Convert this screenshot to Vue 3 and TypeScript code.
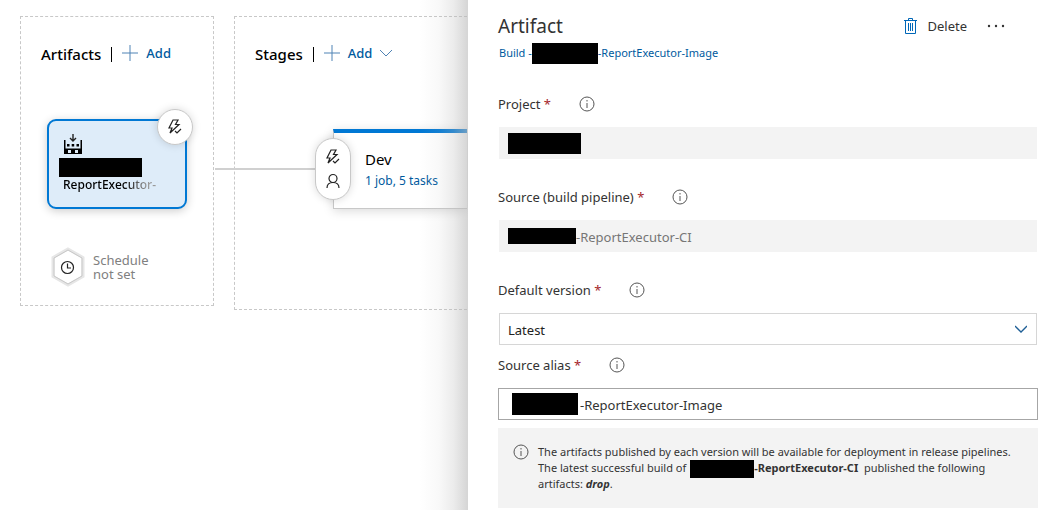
<script setup lang="ts">
import { ref } from 'vue'

const version = ref<string>('Latest')
const source = ref<string>('-ReportExecutor-CI')
const alias = ref<string>('-ReportExecutor-Image')
</script>

<template>
  <div class="page">
    <main class="canvas">
      <section class="lane artifacts">
        <header class="lane-head">
          <h2>Artifacts</h2>
          <span class="bar"></span>
          <button type="button" class="add">
            <svg width="16" height="16" viewBox="0 0 16 16"><path d="M8 0v16M0 8h16" /></svg>
            <span>Add</span>
          </button>
        </header>

        <div class="artifact-card">
          <svg class="factory" width="18" height="20" viewBox="0 0 18 20">
            <path d="M9 0v7M6 4l3 3 3-3" fill="none" stroke="#222" stroke-width="1.4" />
            <path fill="#000" fill-rule="evenodd" d="M0 6h1.500v8.500h15V6H18v14H0zM4 16v3h3v-3zM11 16v3h3v-3z" />
            <path fill="#000" d="M3 10h2.500v2.500H3zM7.700 10h2.500v2.500H7.700zM12.500 10H15v2.500h-2.500z" />
          </svg>
          <span class="mask card-mask"></span>
          <span class="card-name">ReportExecutor-</span>
          <button type="button" class="badge" aria-label="Continuous deployment trigger">
            <svg class="bolt" width="16" height="16" viewBox="0 0 16 16"><path d="M6 1h5L8.500 5.500H12L3 14l2-5H2zM8 12l2 2 4-4" /></svg>
          </button>
        </div>

        <div class="schedule">
          <svg width="34" height="40" viewBox="0 0 34 40">
            <path d="M17 2 32 10.500v19L17 38 2 29.500v-19z" fill="#fff" stroke="#e6e6e6" stroke-width="3" />
            <path d="M17 3 31 11v18l-14 8L3 29V11z" fill="none" stroke="#c8c8c8" />
            <circle cx="16.500" cy="20.500" r="6" fill="none" stroke="#222" stroke-width="1.200" />
            <path d="M16.500 16.500v4.500h3.500" fill="none" stroke="#222" stroke-width="1.200" />
          </svg>
          <span>Schedule<br />not set</span>
        </div>
      </section>

      <section class="lane stages">
        <header class="lane-head">
          <h2>Stages</h2>
          <span class="bar"></span>
          <button type="button" class="add">
            <svg width="16" height="16" viewBox="0 0 16 16"><path d="M8 0v16M0 8h16" /></svg>
            <span>Add</span>
            <svg width="12" height="8" viewBox="0 0 12 8"><path d="M0 1l6 6 6-6" /></svg>
          </button>
        </header>

        <div class="stage-card">
          <span class="connector"></span>
          <button type="button" class="pill" aria-label="Pre-deployment conditions">
            <svg class="bolt" width="16" height="16" viewBox="0 0 16 16"><path d="M6 1h5L8.500 5.500H12L3 14l2-5H2zM8 12l2 2 4-4" /></svg>
            <svg class="bolt" width="16" height="16" viewBox="0 0 16 16"><circle cx="8" cy="5.500" r="4" /><path d="M2 15c0-3.500 2.500-5.500 6-5.500s6 2 6 5.500" /></svg>
          </button>
          <h3>Dev</h3>
          <a href="#">1 job, 5 tasks</a>
        </div>
      </section>
    </main>

    <aside class="panel">
      <header class="panel-head">
        <h1>Artifact</h1>
        <div class="actions">
          <button type="button" class="delete">
            <svg width="14" height="16" viewBox="0 0 14 16" fill="none" stroke="#0067b8">
              <path d="M0 2.500h13M4.500 2V.5h4V2M1.500 3v12.500h10V3M4.500 5v8M6.500 5v8M8.500 5v8" />
            </svg>
            Delete
          </button>
          <button type="button" class="more" aria-label="More actions">
            <svg width="18" height="4" viewBox="0 0 18 4" fill="#333"><circle cx="2" cy="2" r="1.200" /><circle cx="9" cy="2" r="1.200" /><circle cx="16" cy="2" r="1.200" /></svg>
          </button>
        </div>
      </header>
      <a href="#" class="crumb"><span>Build -</span><span class="mask crumb-mask"></span><span>-ReportExecutor-Image</span></a>

      <form @submit.prevent>
        <div class="group">
          <div class="label">
            <label for="project">Project <b>*</b></label>
            <svg class="info" width="16" height="16" viewBox="0 0 16 16"><circle cx="8" cy="8" r="7" /><path d="M8 7v5M8 4v1.500" /></svg>
          </div>
          <div class="field disabled">
            <span class="mask project-mask"></span>
            <input id="project" type="text" disabled />
          </div>
        </div>

        <div class="group">
          <div class="label">
            <label for="source">Source (build pipeline) <b>*</b></label>
            <svg class="info" width="16" height="16" viewBox="0 0 16 16"><circle cx="8" cy="8" r="7" /><path d="M8 7v5M8 4v1.500" /></svg>
          </div>
          <div class="field disabled">
            <span class="mask source-mask"></span>
            <input id="source" v-model="source" type="text" disabled />
          </div>
        </div>

        <div class="group tight">
          <div class="label">
            <label for="version">Default version <b>*</b></label>
            <svg class="info" width="16" height="16" viewBox="0 0 16 16"><circle cx="8" cy="8" r="7" /><path d="M8 7v5M8 4v1.500" /></svg>
          </div>
          <div class="field dropdown">
            <select id="version" v-model="version">
              <option>Latest</option>
            </select>
            <svg width="12" height="8" viewBox="0 0 12 8" fill="none" stroke="#1f5f96" stroke-width="1.300"><path d="M0 1l6 6 6-6" /></svg>
          </div>
        </div>

        <div class="group last">
          <div class="label">
            <label for="alias">Source alias <b>*</b></label>
            <svg class="info" width="16" height="16" viewBox="0 0 16 16"><circle cx="8" cy="8" r="7" /><path d="M8 7v5M8 4v1.500" /></svg>
          </div>
          <div class="field alias">
            <span class="mask alias-mask"></span>
            <input id="alias" v-model="alias" type="text" />
          </div>
        </div>
      </form>

      <div class="note">
        <svg class="info" width="16" height="16" viewBox="0 0 16 16"><circle cx="8" cy="8" r="7" /><path d="M8 7v5M8 4v1.500" /></svg>
        <p>
          The artifacts published by each version will be available for deployment in release pipelines.
          The latest successful build of<span class="mask note-mask"></span><strong>-ReportExecutor-CI</strong>&nbsp; published the following
          artifacts: <strong><em>drop</em></strong>.
        </p>
      </div>
    </aside>
  </div>
</template>

<style>
body {
  margin: 0;
  background: #fff;
}
</style>

<style scoped>
.page {
  display: grid;
  grid-template-columns: minmax(0, 468fr) minmax(0, 570fr);
  min-height: 100vh;
  overflow: hidden;
  font-family: "Segoe UI", "Noto Sans", "Open Sans", sans-serif;
  font-size: 13px;
  line-height: 20px;
  color: #333;
}

.page * {
  box-sizing: border-box;
}

h1, h2, h3, p {
  margin: 0;
}

button, input, select {
  font: inherit;
  color: inherit;
  border: 0;
  padding: 0;
  background: none;
}

a {
  color: #005a9e;
  text-decoration: none;
}

.mask {
  display: inline-block;
  flex: none;
  background: #000;
}

.canvas {
  position: relative;
  display: flex;
  align-items: flex-start;
  gap: 20px;
  padding: 16px 1px 0 20px;
  overflow: hidden;
}

.canvas::after {
  content: "";
  position: absolute;
  inset: 0 0 0 auto;
  width: 48px;
  background: linear-gradient(to right, rgba(190, 190, 190, 0), rgba(190, 190, 190, 0.1) 40%, rgba(185, 185, 185, 0.28) 70%, rgba(185, 185, 185, 0.6));
  pointer-events: none;
}

.lane {
  flex: none;
  border: 1px dashed #c8c8c8;
}

.artifacts {
  width: 194px;
  height: 290px;
}

.stages {
  flex: 1;
  height: 294px;
  border-right: 0;
}

.lane-head {
  display: flex;
  align-items: center;
  gap: 10px;
  height: 20px;
  margin: 27px 0 0 20px;
}

h2 {
  font-size: 15px;
  font-weight: 500;
  color: #000;
}

.bar {
  width: 1px;
  height: 15px;
  background: #000;
}

.add {
  display: flex;
  align-items: center;
  gap: 8px;
  padding-bottom: 2px;
  font-weight: 500;
  color: #005a9e;
}

.add svg {
  fill: none;
  stroke: #4f83b5;
}

.artifact-card {
  position: relative;
  display: flex;
  flex-direction: column;
  align-items: flex-start;
  width: 140px;
  height: 90px;
  margin: 55px 0 0 26px;
  padding: 13px 10px;
  border: 2px solid #0078d4;
  border-radius: 9px;
  background: #deecf9;
  box-shadow: 0 2px 10px rgba(0, 0, 0, 0.2);
}

.factory {
  margin-left: 5px;
}

.card-mask {
  width: 83px;
  height: 19px;
  margin-top: 4px;
}

.card-name {
  margin-left: 4px;
  font-size: 12px;
  font-weight: 500;
  line-height: 16px;
  background: linear-gradient(to right, #000 65%, #999 90%);
  background-clip: text;
  color: transparent;
}

.badge {
  position: absolute;
  top: -12px;
  right: -8px;
  display: grid;
  place-items: center;
  width: 36px;
  height: 36px;
  border: 1px solid #c8c8c8;
  border-radius: 50%;
  background: #fff;
  box-shadow: 0 0 8px rgba(0, 0, 0, 0.15);
}

.bolt {
  fill: none;
  stroke: #222;
  stroke-width: 1.2px;
}

.schedule {
  display: flex;
  align-items: center;
  gap: 8px;
  margin: 38px 0 0 30px;
  line-height: 14px;
  color: #808080;
}

.stage-card {
  position: relative;
  height: 80px;
  margin: 65px 0 0 98px;
  padding: 16px 0 0 31px;
  border: 1px solid #c8c8c8;
  border-top: 4px solid #0078d4;
  border-right: 0;
  background: #fff;
  box-shadow: 0 2px 10px rgba(0, 0, 0, 0.15);
}

.connector {
  position: absolute;
  top: 35px;
  right: 100%;
  width: 119px;
  height: 2px;
  background: #d0d0d0;
}

.pill {
  position: absolute;
  top: 5px;
  left: -19px;
  display: flex;
  flex-direction: column;
  align-items: center;
  justify-content: center;
  gap: 8px;
  width: 36px;
  height: 62px;
  border: 1px solid #c8c8c8;
  border-radius: 18px;
  background: #fff;
  box-shadow: 0 0 8px rgba(0, 0, 0, 0.15);
}

h3 {
  font-size: 15px;
  font-weight: 400;
  line-height: 20px;
  color: #000;
}

.stage-card a {
  display: block;
  font-size: 12px;
  line-height: 24px;
}

.panel {
  padding: 16px 0 2px 30px;
  background: #fff;
}

.panel-head {
  display: flex;
  justify-content: space-between;
  align-items: center;
  height: 20px;
}

h1 {
  font-size: 19px;
  font-weight: 400;
}

.actions {
  display: flex;
  align-items: center;
  gap: 20px;
  margin-right: 33px;
}

.delete {
  display: flex;
  align-items: center;
  gap: 9px;
}

.more {
  display: flex;
}

.crumb {
  display: flex;
  align-items: center;
  height: 20px;
  margin: 7px 0 31px 1px;
  font-size: 11px;
}

.crumb-mask {
  width: 66px;
  height: 21px;
}

.group {
  margin-bottom: 28px;
}

.group.tight {
  margin-bottom: 10px;
}

.group.last {
  margin-bottom: 8px;
}

.label {
  display: flex;
  align-items: center;
  gap: 28px;
  margin-bottom: 13px;
}

.label b {
  font-weight: 400;
  color: #a4262c;
}

.info {
  flex: none;
  fill: none;
  stroke: #555;
}

.field {
  display: flex;
  align-items: center;
  height: 32px;
}

.field input, .field select {
  flex: 1;
  min-width: 0;
  height: 100%;
  padding-top: 2px;
  outline: none;
}

.disabled {
  margin: 0 1px;
  padding: 0 9px;
  background: #f3f3f3;
}

.disabled input {
  color: #767676;
}

.dropdown {
  position: relative;
  margin: 0 1px;
  border: 1px solid #d6d6d6;
}

.dropdown select {
  appearance: none;
  padding-left: 8px;
  padding-right: 30px;
  color: #222;
}

.dropdown svg {
  position: absolute;
  top: 11px;
  right: 9px;
  pointer-events: none;
}

.alias {
  padding: 0 13px;
  border: 1px solid #a6a6a6;
}

.alias input {
  padding-left: 2px;
}

.project-mask {
  width: 73px;
  height: 21px;
}

.source-mask {
  width: 68px;
  height: 16px;
}

.alias-mask {
  width: 66px;
  height: 22px;
}

.note {
  display: flex;
  gap: 9px;
  padding: 16px 14px 16px 15px;
  background: #f3f3f3;
  font-size: 11px;
  line-height: 16px;
}

.note-mask {
  width: 64px;
  height: 18px;
  margin: 0 0 -2px 4px;
  vertical-align: top;
}
</style>
